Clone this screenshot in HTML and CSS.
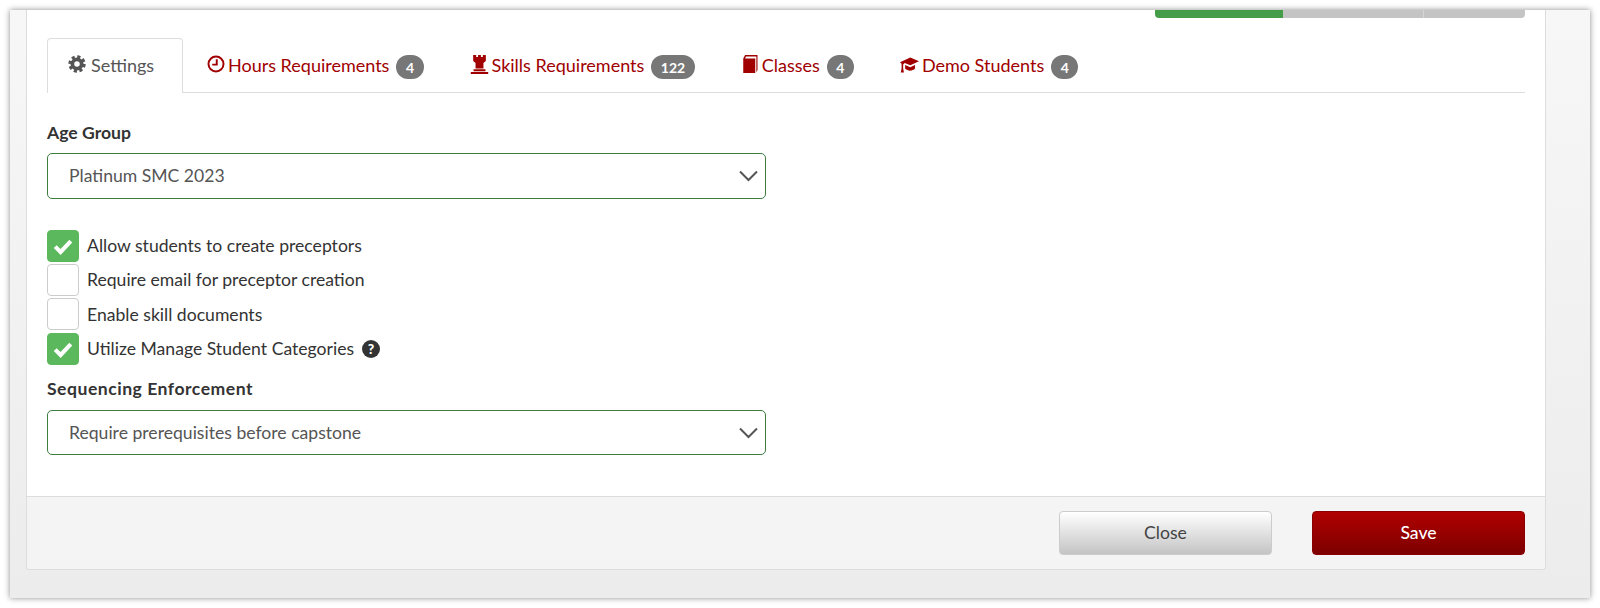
FILE: index.html
```html
<!DOCTYPE html>
<html lang="en">
<head>
<meta charset="utf-8">
<title>Settings</title>
<link rel="stylesheet" href="styles.css">
</head>
<body>
<div class="window">
  <div class="panel">
    <div class="panel-body">
      <div class="progress">
        <div class="seg seg-done"></div>
        <div class="seg seg-a"></div>
        <div class="seg seg-b"></div>
      </div>
      <ul class="tabs">
        <li class="tab tab-active">
          <svg class="ico ico-gear" viewBox="0 0 24 24"><circle cx="12" cy="12" r="6.2" class="gear-ring"/><circle cx="12" cy="12" r="9.6" class="gear-teeth"/></svg>
          <span>Settings</span>
        </li>
        <li class="tab">
          <svg class="ico" viewBox="0 0 24 24"><circle cx="12" cy="12" r="10" class="clock"/><path d="M13 5.500v7.300H7" class="clock"/></svg>
          <span>Hours Requirements</span><b class="badge">4</b>
        </li>
        <li class="tab">
          <svg class="ico ico-wide" viewBox="0 0 24 24"><path d="M4 0h3.800v2.600h2.400V0h3.600v2.600h2.400V0H20v7.500l-3 2.500v7H7v-7L4 7.500zM4.500 18h15v2.500h-15zM1 21.500h22V24H1z" class="fill"/></svg>
          <span>Skills Requirements</span><b class="badge">122</b>
        </li>
        <li class="tab">
          <svg class="ico" viewBox="0 0 24 24"><path d="M3 4.500 5.500 0H22v20l-1.500 3V2H6.500L5.500 4.500H19V24H3z" class="fill"/></svg>
          <span>Classes</span><b class="badge">4</b>
        </li>
        <li class="tab">
          <svg class="ico ico-wide" viewBox="0 0 24 24"><path d="M13 3 24 8 13 13 6 10 4 12v5l1 5H1l1-5v-6L0 9zM6.500 12.500 13 15.500l6-2.800v4.300c-1.500 1.700-4 2.800-6.500 2.800-2 0-4-.8-6-2.300z" class="fill"/></svg>
          <span>Demo Students</span><b class="badge">4</b>
        </li>
      </ul>
      <form class="form">
        <label class="field-label field-first">Age Group</label>
        <div class="select">
          <span>Platinum SMC 2023</span>
          <svg class="chev" viewBox="0 0 20 12"><path d="M1.500 1.500 10 10l8.500-8.500"/></svg>
        </div>
        <div class="checks">
          <div class="check"><span class="box box-on"><svg viewBox="0 0 20 20"><path d="M3.500 10.500 8 15l8.500-9"/></svg></span><span>Allow students to create preceptors</span></div>
          <div class="check"><span class="box"></span><span>Require email for preceptor creation</span></div>
          <div class="check"><span class="box"></span><span>Enable skill documents</span></div>
          <div class="check"><span class="box box-on"><svg viewBox="0 0 20 20"><path d="M3.500 10.500 8 15l8.500-9"/></svg></span><span>Utilize Manage Student Categories</span><span class="help">?</span></div>
        </div>
        <label class="field-label field-wide">Sequencing Enforcement</label>
        <div class="select select-last">
          <span>Require prerequisites before capstone</span>
          <svg class="chev" viewBox="0 0 20 12"><path d="M1.500 1.500 10 10l8.500-8.500"/></svg>
        </div>
      </form>
    </div>
    <div class="panel-footer">
      <button type="button" class="btn btn-close">Close</button>
      <button type="button" class="btn btn-save">Save</button>
    </div>
  </div>
</div>
</body>
</html>
```
FILE: styles.css
```css
* { box-sizing: border-box; }
html, body { margin: 0; height: 100%; background: #fff; overflow: hidden; }
body {
  padding: 10px;
  font-family: "Lato", "Liberation Sans", sans-serif;
  font-size: 17.6px;
  color: #333;
}
.window {
  height: 588px;
  background: #f0f0f0;
  background-image: linear-gradient(#f7f7f7, #ececec);
  padding: 0 44px 28px 16px;
  box-shadow: 0 0 6px rgba(0,0,0,.45);
  overflow: hidden;
}
.panel {
  height: 100%;
  background: #fff;
  border: 1px solid #ddd;
  border-top: 0;
  border-radius: 0 0 4px 4px;
  display: flex;
  flex-direction: column;
}
.panel-body { flex: 1; padding: 0 20px; }
.progress { display: flex; height: 8px; margin-left: 1108px; }
.seg-done { width: 128px; background: #449d48; border-radius: 0 0 0 4px; }
.seg-a { width: 142px; background: #c4c4c4; border-right: 1px solid #d6d6d6; }
.seg-b { width: 101px; background: #c4c4c4; border-radius: 0 0 4px 0; }
.tabs {
  list-style: none;
  margin: 20px 0 0;
  padding: 0;
  display: flex;
  gap: 2px;
  height: 55px;
  border-bottom: 1px solid #ddd;
  font-size: 18px;
}
.tab {
  height: 55px;
  padding: 0 21px 2px;
  display: flex;
  align-items: center;
  color: #a00000;
  border: 1px solid transparent;
  border-bottom: 0;
}
.tab-active {
  width: 136px;
  padding: 0 20px 2px;
  color: #555;
  background: #fff;
  border-color: #ddd;
  border-radius: 4px 4px 0 0;
  position: relative;
}
.ico { width: 18px; height: 18px; margin-right: 3px; flex: none; position: relative; top: -1px; }
.ico-wide { width: 19px; height: 19px; margin-right: 3px; }
.ico-gear { margin-right: 5px; }
.gear-ring { fill: none; stroke: currentColor; stroke-width: 5; }
.gear-teeth { fill: none; stroke: currentColor; stroke-width: 4; stroke-dasharray: 4.2 3.340; }
.clock { fill: none; stroke: currentColor; stroke-width: 2.6; }
.fill { fill: currentColor; }
.badge {
  margin: 4px 0 0 7px;
  min-width: 27px;
  height: 24px;
  padding: 0 9.500px;
  border-radius: 12px;
  background: #777;
  color: #fff;
  font-size: 14px;
  font-weight: 700;
  display: flex;
  align-items: center;
  justify-content: center;
}
.form { display: flex; flex-direction: column; }
.field-label { font-weight: 700; font-size: 17.6px; line-height: 22px; color: #333; }
.field-first { margin-top: 28.500px; margin-bottom: -1px; }
.field-wide { letter-spacing: .5px; }
.select {
  margin-top: 10px;
  width: 719px;
  height: 46px;
  border: 1px solid #3c7d3f;
  border-radius: 5px;
  padding: 0 6px 0 21px;
  display: flex;
  align-items: center;
  justify-content: space-between;
  color: #555;
  background: #fff;
}
.select-last { height: 45px; }
.chev { width: 21px; height: 12px; }
.chev path { fill: none; stroke: #555; stroke-width: 2; }
.checks { margin-top: 31px; margin-bottom: 13.500px; display: flex; flex-direction: column; gap: 2.400px; }
.check { display: flex; align-items: center; height: 32px; color: #333; }
.box {
  width: 32px;
  height: 32px;
  margin-right: 8px;
  border: 1px solid #ccc;
  border-radius: 4px;
  background: #fff;
  flex: none;
  display: flex;
  align-items: center;
  justify-content: center;
}
.box-on { background: #5cb85c; border-color: #5cb85c; }
.box svg { width: 24px; height: 24px; }
.box svg path { fill: none; stroke: #fff; stroke-width: 3.400; }
.help {
  width: 18px;
  height: 18px;
  margin-left: 8px;
  border-radius: 50%;
  background: #333;
  color: #fff;
  font-size: 14px;
  font-weight: 900;
  line-height: 18px;
  text-align: center;
}
.panel-footer {
  height: 73px;
  flex: none;
  background: #f4f4f4;
  border-top: 1px solid #ddd;
  border-radius: 0 0 4px 4px;
  padding: 14px 20px 0;
  display: flex;
  justify-content: flex-end;
  gap: 40px;
}
.btn {
  width: 213px;
  height: 44px;
  padding: 0 0 2px;
  border-radius: 4px;
  font-family: inherit;
  font-size: 17.6px;
}
.btn-close {
  color: #444;
  border: 1px solid #ccc;
  background: linear-gradient(#fff, #c4c4c4);
}
.btn-save {
  color: #fff;
  font-weight: 500;
  border: 1px solid #8a0000;
  background: linear-gradient(#b00000, #7d0000);
}
```
